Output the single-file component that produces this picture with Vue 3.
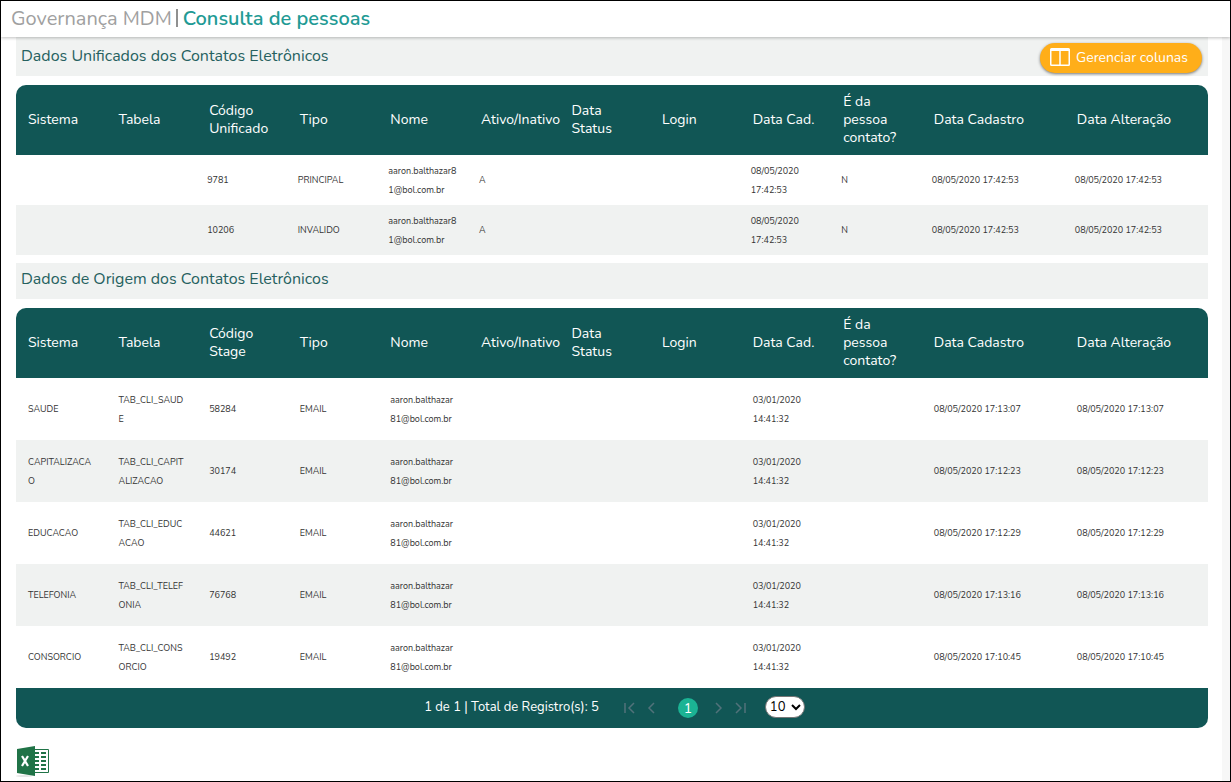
<script setup>
import { ref } from 'vue'

const columns = (code) => [
  'Sistema', 'Tabela', code, 'Tipo', 'Nome', 'Ativo/Inativo', 'Data\nStatus',
  'Login', 'Data Cad.', 'É da\npessoa\ncontato?', 'Data Cadastro', 'Data Alteração',
]

const unified = [
  ['9781', 'PRINCIPAL'],
  ['10206', 'INVALIDO'],
].map(([code, type]) => [
  '', '', code, type, 'aaron.balthazar8\n1@bol.com.br', 'A', '', '',
  '08/05/2020\n17:42:53', 'N', '08/05/2020 17:42:53', '08/05/2020 17:42:53',
])

const origin = [
  ['SAUDE', 'TAB_CLI_SAUD\nE', '58284', '17:13:07'],
  ['CAPITALIZACA\nO', 'TAB_CLI_CAPIT\nALIZACAO', '30174', '17:12:23'],
  ['EDUCACAO', 'TAB_CLI_EDUC\nACAO', '44621', '17:12:29'],
  ['TELEFONIA', 'TAB_CLI_TELEF\nONIA', '76768', '17:13:16'],
  ['CONSORCIO', 'TAB_CLI_CONS\nORCIO', '19492', '17:10:45'],
].map(([system, table, code, time]) => [
  system, table, code, 'EMAIL', 'aaron.balthazar\n81@bol.com.br', '', '', '',
  '03/01/2020\n14:41:32', '', `08/05/2020 ${time}`, `08/05/2020 ${time}`,
])

const sections = [
  { title: 'Dados Unificados dos Contatos Eletrônicos', kind: 'unified', columns: columns('Código\nUnificado'), rows: unified },
  { title: 'Dados de Origem dos Contatos Eletrônicos', kind: 'origin', columns: columns('Código\nStage'), rows: origin },
]

const pageSize = ref('10')
</script>

<template>
  <div class="page">
    <header class="topbar">
      <span class="product">Governança MDM</span>
      <span class="divider"></span>
      <h1>Consulta de pessoas</h1>
    </header>

    <main class="content">
      <section v-for="s in sections" :key="s.kind" class="block" :class="s.kind">
        <div class="title-row">
          <h2>{{ s.title }}</h2>
          <button v-if="s.kind === 'unified'" type="button" class="manage">
            <svg width="20" height="18" viewBox="0 0 20 18" aria-hidden="true">
              <path fill="#fff" fill-rule="evenodd" d="M1.500 0h17A1.500 1.500 0 0 1 20 1.500v15a1.500 1.500 0 0 1-1.500 1.500h-17A1.500 1.500 0 0 1 0 16.500v-15A1.500 1.500 0 0 1 1.500 0zM1.500 3v13.500h7.750V3zM10.750 3v13.500h7.750V3z" />
            </svg>
            Gerenciar colunas
          </button>
        </div>
        <div class="grid">
          <table>
            <colgroup>
              <col v-for="(c, i) in s.columns" :key="i" :class="i > 9 ? 'wide' : 'narrow'" />
            </colgroup>
            <thead>
              <tr><th v-for="c in s.columns" :key="c" scope="col">{{ c }}</th></tr>
            </thead>
            <tbody>
              <tr v-for="(r, i) in s.rows" :key="i">
                <td v-for="(v, j) in r" :key="j">{{ v }}</td>
              </tr>
            </tbody>
          </table>
          <nav v-if="s.kind === 'origin'" class="pager" aria-label="Paginação">
            <span class="total">1 de 1 | Total de Registro(s): 5</span>
            <button type="button" class="arrow" aria-label="Primeira página" disabled>
              <svg width="12" height="12" viewBox="0 0 12 12"><path d="M1 1v10M10 1L5 6l5 5" /></svg>
            </button>
            <button type="button" class="arrow" aria-label="Página anterior" disabled>
              <svg width="12" height="12" viewBox="0 0 12 12"><path d="M8 1L3 6l5 5" /></svg>
            </button>
            <button type="button" class="current" aria-current="page">1</button>
            <button type="button" class="arrow" aria-label="Próxima página" disabled>
              <svg width="12" height="12" viewBox="0 0 12 12"><path d="M4 1l5 5-5 5" /></svg>
            </button>
            <button type="button" class="arrow" aria-label="Última página" disabled>
              <svg width="12" height="12" viewBox="0 0 12 12"><path d="M2 1l5 5-5 5M11 1v10" /></svg>
            </button>
            <select v-model="pageSize" aria-label="Registros por página">
              <option>10</option>
              <option>20</option>
              <option>50</option>
            </select>
          </nav>
        </div>
      </section>

      <button type="button" class="excel" aria-label="Exportar para Excel">
        <svg width="34" height="33" viewBox="0 0 34 33" aria-hidden="true">
          <ellipse cx="8" cy="31" rx="8" ry="1" fill="#e6e6e6" />
          <path d="M18 4.500h14.500v23H18z" fill="#fff" stroke="#207347" />
          <path d="M19 7h4v2h-4zM25 7h5v2h-5zM19 11h4v2h-4zM25 11h5v2h-5zM19 15h4v2h-4zM25 15h5v2h-5zM19 19h4v2h-4zM25 19h5v2h-5zM19 23h4v2h-4zM25 23h5v2h-5z" fill="#207347" />
          <path d="M1 4L19 1v30L1 28z" fill="#207347" />
          <path d="M6 11l6 10M12 11L6 21" stroke="#fff" stroke-width="2.200" fill="none" />
        </svg>
      </button>
    </main>
  </div>
</template>

<style>
body {
  background: #fff;
}
</style>

<style scoped>
.page {
  box-sizing: border-box;
  min-height: 100vh;
  border: 1px solid #000;
  display: flex;
  flex-direction: column;
  font-family: Nunito, Lato, 'Open Sans', sans-serif;
  background: #fff;
}
.topbar {
  position: relative;
  display: flex;
  align-items: center;
  height: 36px;
  padding: 0 10px 2px;
  box-sizing: border-box;
  box-shadow: 0 1px 3px rgba(0, 0, 0, 0.25);
}
.product {
  font-size: 20px;
  font-weight: 400;
  color: #a0a0a0;
}
.divider {
  width: 2px;
  height: 18px;
  margin: 0 5px 0 4px;
  background: #909090;
}
h1 {
  margin: 0;
  font-size: 20px;
  font-weight: 600;
  color: #229a94;
}
.content {
  flex: 1;
  padding: 0 14px 0 15px;
  border-right: 8px solid #f7f7f7;
}
.title-row {
  display: flex;
  align-items: flex-start;
  justify-content: space-between;
  box-sizing: border-box;
  height: 36px;
  margin-bottom: 9px;
  padding: 0 6px 0 5px;
  background: #f0f2f1;
}
.unified .title-row {
  height: 39px;
  padding-top: 3px;
}
.unified {
  margin-bottom: 8px;
}
h2 {
  margin: 0;
  font-size: 16px;
  font-weight: 400;
  line-height: 32px;
  color: #26615f;
}
.manage {
  display: flex;
  align-items: center;
  gap: 6px;
  height: 30px;
  margin-top: 3px;
  padding: 0 14px 2px 10px;
  border: 0;
  border-radius: 15px;
  background: #ffae19;
  color: #fff;
  font: 14px Nunito, Lato, 'Open Sans', sans-serif;
  box-shadow: 0 1px 3px rgba(0, 0, 0, 0.5);
}
.grid {
  overflow: hidden;
  border-radius: 10px 10px 0 0;
}
.origin .grid {
  border-radius: 10px;
}
table {
  width: 100%;
  table-layout: fixed;
  border-collapse: collapse;
}
.narrow {
  width: 7.6%;
}
.wide {
  width: 12%;
}
th {
  height: 70px;
  padding: 0 0 0 12px;
  background: #115655;
  color: #fff;
  font-size: 14px;
  font-weight: 400;
  line-height: 18px;
  text-align: left;
  white-space: pre;
}
td {
  box-sizing: border-box;
  height: 62px;
  padding: 1px 0 0 12px;
  color: #333;
  font-size: 9px;
  font-weight: 400;
  line-height: 19px;
  white-space: pre;
}
.unified td {
  height: 50px;
  padding-left: 10px;
}
tr:nth-child(even) td {
  background: #f0f2f1;
}
.pager {
  display: flex;
  align-items: center;
  justify-content: center;
  height: 40px;
  padding-left: 5px;
  background: #115655;
  color: #fff;
}
.total {
  margin-right: 20px;
  padding-bottom: 2px;
  font-size: 13px;
}
.arrow {
  display: flex;
  align-items: center;
  justify-content: center;
  width: 22px;
  height: 22px;
  padding: 0;
  border: 0;
  background: none;
}
.arrow path {
  fill: none;
  stroke: #51727a;
  stroke-width: 1.500;
}
.current {
  width: 20px;
  height: 20px;
  margin: 0 9px 0 15px;
  padding: 0;
  border: 0;
  border-radius: 50%;
  background: #1bb394;
  color: #fff;
  font: 14px Nunito, Lato, 'Open Sans', sans-serif;
}
select {
  width: 40px;
  height: 22px;
  margin: 0 0 2px 14px;
  padding: 0;
  border: 1px solid #767676;
  border-radius: 11px;
  background: #fff;
  color: #000;
  font: 13px Nunito, Lato, 'Open Sans', sans-serif;
}
.excel {
  display: block;
  margin: 17px 0 0;
  padding: 0;
  border: 0;
  background: none;
}
.excel svg {
  display: block;
}
</style>
